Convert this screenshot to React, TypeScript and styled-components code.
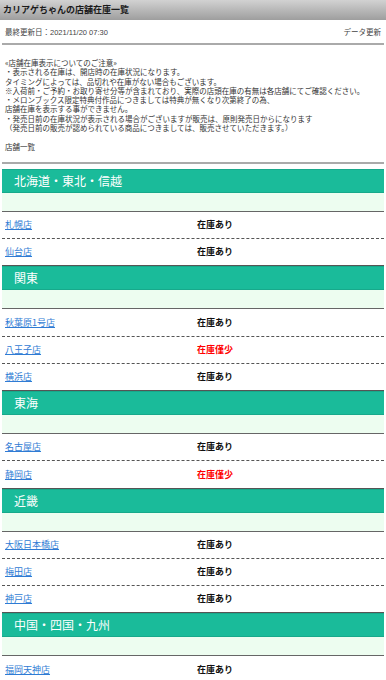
import styled, { createGlobalStyle } from 'styled-components';

type Stock = 'many' | 'few';

interface IStore {
  name: string;
  stock: Stock;
}

interface IArea {
  title: string;
  stores: IStore[];
}

const areas: IArea[] = [
  {
    title: '北海道・東北・信越',
    stores: [
      { name: '札幌店', stock: 'many' },
      { name: '仙台店', stock: 'many' },
    ],
  },
  {
    title: '関東',
    stores: [
      { name: '秋葉原1号店', stock: 'many' },
      { name: '八王子店', stock: 'few' },
      { name: '横浜店', stock: 'many' },
    ],
  },
  {
    title: '東海',
    stores: [
      { name: '名古屋店', stock: 'many' },
      { name: '静岡店', stock: 'few' },
    ],
  },
  {
    title: '近畿',
    stores: [
      { name: '大阪日本橋店', stock: 'many' },
      { name: '梅田店', stock: 'many' },
      { name: '神戸店', stock: 'many' },
    ],
  },
  {
    title: '中国・四国・九州',
    stores: [
      { name: '福岡天神店', stock: 'many' },
    ],
  },
];

const notes = [
  '«店舗在庫表示についてのご注意»',
  '・表示される在庫は、開店時の在庫状況になります。',
  'タイミングによっては、品切れや在庫がない場合もございます。',
  '※入荷前・ご予約・お取り寄せ分等が含まれており、実際の店頭在庫の有無は各店舗にてご確認ください。',
  '・メロンブックス限定特典付作品につきましては特典が無くなり次第終了の為、',
  '店舗在庫を表示する事ができません。',
  '・発売日前の在庫状況が表示される場合がございますが販売は、原則発売日からになります',
  '（発売日前の販売が認められている商品につきましては、販売させていただきます。）',
];

const GlobalStyle = createGlobalStyle`
  body {
    margin: 0;
    background: #fff;
    font-family: "Noto Sans CJK JP", "Noto Sans", sans-serif;
    color: #222;
  }
`;

export default function App() {
  return (
    <>
      <GlobalStyle />
      <TitleBar>カリアゲちゃんの店舗在庫一覧</TitleBar>
      <Content>
        <InfoBar>
          <span>最終更新日：2021/11/20 07:30</span>
          <span>データ更新</span>
        </InfoBar>
        <Notice>
          {notes.map(line => <NoteLine key={line}>{line}</NoteLine>)}
        </Notice>
        <ListHeading>店舗一覧</ListHeading>
        <AreaList>
          {areas.map((area, i) => (
            <Area key={area.title} $first={i === 0}>
              <AreaTitle>{area.title}</AreaTitle>
              <AreaSpacer />
              {area.stores.map(store => (
                <StoreRow key={store.name}>
                  <StoreCell>
                    <StoreLink href="#">{store.name}</StoreLink>
                  </StoreCell>
                  <StockCell $few={store.stock === 'few'}>
                    {store.stock === 'few' ? '在庫僅少' : '在庫あり'}
                  </StockCell>
                </StoreRow>
              ))}
            </Area>
          ))}
        </AreaList>
      </Content>
    </>
  );
}

const TitleBar = styled.h1`
  margin: 0;
  height: 20px;
  padding-left: 3px;
  background: linear-gradient(to bottom, #d2d2d2, #9e9e9e);
  font-size: 9px;
  font-weight: bold;
  line-height: 20px;
  color: #1a1a1a;
`;

const Content = styled.div`
  padding: 0 2px;
`;

const InfoBar = styled.div`
  display: flex;
  justify-content: space-between;
  padding: 8px 3px 5px;
  border-bottom: 2px solid #aaa;
  font-family: "Liberation Sans", "Noto Sans CJK JP", sans-serif;
  font-size: 7.5px;
  line-height: 10px;
  color: #444;
`;

const Notice = styled.div`
  margin-top: 13px;
  padding: 0 3px;
  font-size: 7.5px;
  line-height: 9.3px;
  color: #333;
`;

const NoteLine = styled.div`
  white-space: nowrap;
`;

const ListHeading = styled.div`
  margin-top: 9.3px;
  padding: 0 3px 11px;
  border-bottom: 2px solid #aaa;
  font-size: 7.5px;
  line-height: 9.3px;
  color: #333;
`;

const AreaList = styled.div`
  margin-top: 5px;
`;

const Area = styled.section<{ $first: boolean }>`
  border-top: ${p => (p.$first ? 'none' : '1px solid #555')};
`;

const AreaTitle = styled.h2`
  margin: 0;
  height: 24px;
  padding-left: 12px;
  background: #1abb9a;
  border-top: 1px solid #17a98b;
  border-bottom: 1px solid #17a98b;
  box-sizing: border-box;
  font-size: 12px;
  font-weight: normal;
  line-height: 22px;
  color: #fff;
`;

const AreaSpacer = styled.div`
  height: 18px;
  background: #edfdf0;
  border-bottom: 1px solid #666;
`;

const StoreRow = styled.div`
  display: grid;
  grid-template-columns: 1fr 1fr;
  align-items: center;
  height: 26.25px;
  border-bottom: 1px dashed #555;

  &:last-child {
    border-bottom: none;
  }
`;

const StoreCell = styled.div`
  padding-left: 3px;
  font-size: 9px;
  line-height: 12px;
`;

const StoreLink = styled.a`
  color: #2f7bd4;
  text-decoration: underline;
`;

const StockCell = styled.div<{ $few: boolean }>`
  padding-left: 4px;
  font-size: 9px;
  font-weight: bold;
  line-height: 12px;
  color: ${p => (p.$few ? '#f00' : '#111')};
`;
